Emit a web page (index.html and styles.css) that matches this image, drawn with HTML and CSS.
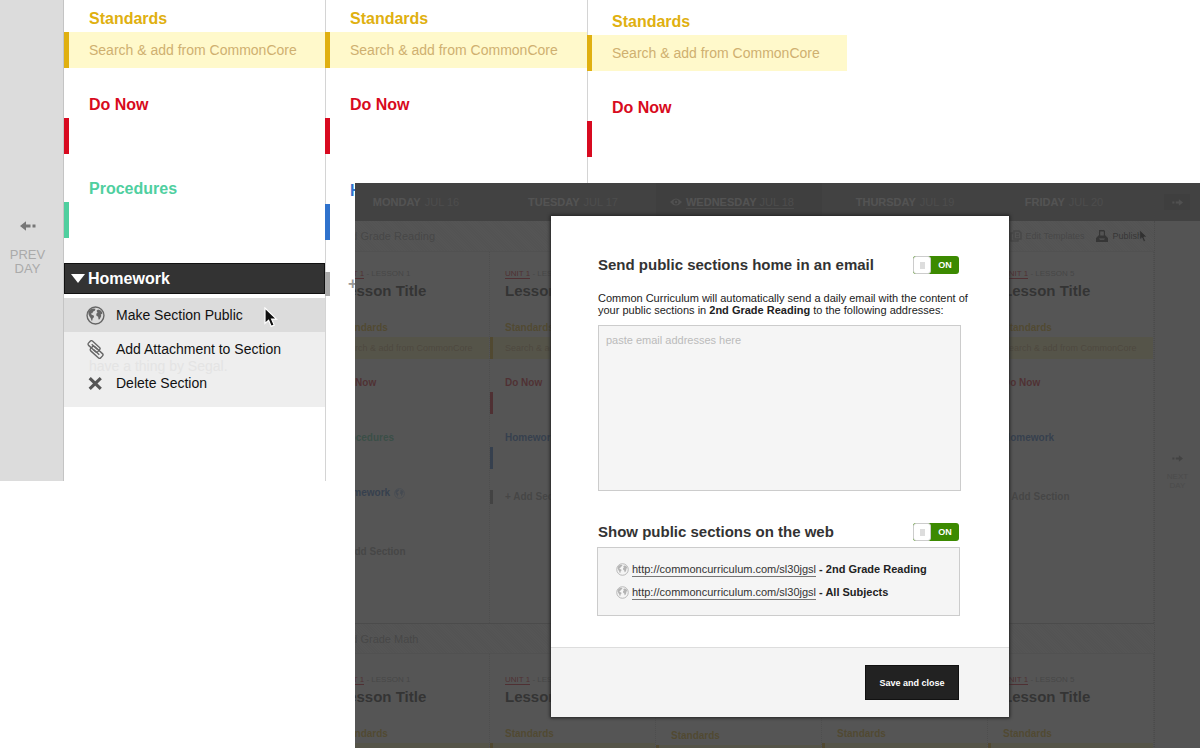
FILE: index.html
```html
<!DOCTYPE html>
<html lang="en">
<head>
<meta charset="utf-8">
<title>Common Curriculum</title>
<link rel="stylesheet" href="styles.css">
</head>
<body>
<svg class="defs" aria-hidden="true">
  <symbol id="globe" viewBox="0 0 18 18">
    <circle cx="9" cy="9" r="8" fill="none" stroke="currentColor" stroke-width="1.300"/>
    <path fill="currentColor" d="M2.200 5.500 4 3.300 6.500 2.300 9 2.600 8.300 4.600 6.800 5.200 6 6.800 4.600 7.200 5.400 8.300 7.300 9 7.600 10.400 6.300 11.800 6 13.800 5.200 14 4.500 11.600 3.200 9.800 2.300 7.600zM10 4.400 11.400 3.400 14 4.200 15.600 6.300 15.200 8 14 7.400 14.400 9.400 13 12.600 11.900 12.900 11.500 10.300 9.900 9.200 9.700 7.400 10.900 6.400z"/>
  </symbol>
  <symbol id="arrow" viewBox="0 0 16 10">
    <path fill="currentColor" d="M0 5 6 .3v3.200h4.500v3H6v3.200zM12.500 3.600h3v2.800h-3z"/>
  </symbol>
  <symbol id="pointer" viewBox="0 0 14 21">
    <path fill="#111" stroke="#fff" stroke-width="1.200" d="M1 1v15.500l3.600-3.300 2.600 6.200 3-1.300-2.600-6H12.500z"/>
  </symbol>
</svg>
<main class="stage">
  <section class="planner" aria-label="Week planner">
    <button class="prev" type="button">
      <svg class="arrow"><use href="#arrow"/></svg>
      <span>PREV<br>DAY</span>
    </button>
    <div class="day first">
      <div class="section gold"><h3>Standards</h3><button type="button" class="slot search">Search &amp; add from CommonCore</button></div>
      <div class="section red"><h3>Do Now</h3><div class="slot"></div></div>
      <div class="section green"><h3>Procedures</h3><div class="slot"></div></div>
      <div class="open">
        <button type="button" class="open-title"><svg class="caret" viewBox="0 0 14 9"><path fill="#fff" d="M0 0h14L7 9z"/></svg>Homework</button>
        <ul class="menu">
          <li><button type="button" class="hover"><svg class="icon"><use href="#globe"/></svg>Make Section Public</button></li>
          <li><button type="button"><svg class="icon" viewBox="0 0 18 18"><g transform="rotate(42 9 9)" fill="none" stroke="#666" stroke-width="1.300"><rect x="0" y="5" width="12" height="5.500" rx="1.500"/><rect x="5" y="7.500" width="13" height="5.500" rx="1.500"/><path d="M3 7.700h7M8 10.300h7"/></g></svg>Add Attachment to Section</button></li>
          <li><button type="button"><svg class="icon" viewBox="0 0 18 18"><path stroke="#555" stroke-width="3" d="M3.500 4l10.500 10M14 4 3.500 14"/></svg>Delete Section</button></li>
        </ul>
        <p class="ghost">have a thing by Segal.</p>
        <svg class="pointer"><use href="#pointer"/></svg>
      </div>
    </div>
    <div class="day">
      <div class="section gold"><h3>Standards</h3><button type="button" class="slot search">Search &amp; add from CommonCore</button></div>
      <div class="section red"><h3>Do Now</h3><div class="slot"></div></div>
      <div class="section blue"><h3>Homework</h3><div class="slot"></div></div>
      <button type="button" class="add">+</button>
    </div>
    <div class="day last">
      <div class="section gold"><h3>Standards</h3><button type="button" class="slot search">Search &amp; add from CommonCore</button></div>
      <div class="section red"><h3>Do Now</h3><div class="slot"></div></div>
    </div>
  </section>

  <section class="window" aria-label="Publish">
    <div class="week">
      <header class="days">
        <div class="monday"><b>MONDAY</b> JUL 16</div>
        <div><b>TUESDAY</b> JUL 17</div>
        <div class="today"><svg class="eye" viewBox="0 0 12 8"><path fill="currentColor" fill-rule="evenodd" d="M0 4Q6-3 12 4 6 11 0 4zM6 1.500a2.500 2.500 0 1 0 0 5 2.500 2.500 0 0 0 0-5z"/><circle cx="6" cy="4" r="1.200" fill="currentColor"/></svg><span class="under"><b>WEDNESDAY</b> JUL 18</span></div>
        <div><b>THURSDAY</b> JUL 19</div>
        <div class="friday"><b>FRIDAY</b> JUL 20</div>
        <button type="button" class="forward" aria-label="Next week"><svg class="small-arrow"><use href="#arrow"/></svg></button>
      </header>
      <div class="board">
        <div class="subjects">
          <div class="subject">
            <div class="bar"><h2>2nd Grade Reading</h2>
              <div class="tools">
                <button type="button"><svg class="tool" viewBox="0 0 12 12"><path fill="none" stroke="currentColor" stroke-width="1.500" d="M4 1h5l2 2v6H4zM3 3H1v8h7V9M6 4h3M6 6.500h3"/></svg>Edit Templates</button>
                <button type="button" class="publish"><svg class="tool" viewBox="0 0 12 12"><path fill="currentColor" d="M3 0h5l1 1v4l3 3v4H0V8l3-3zM4.200 1.500v4h3.600v-4zM3 8.500l1 1.200h4l1-1.200z" fill-rule="evenodd"/></svg>Publish</button>
                <svg class="tiny-pointer"><use href="#pointer"/></svg>
              </div>
            </div>
            <div class="lessons">
              <article><p class="unit"><a href="#u1">UNIT 1</a> - LESSON 1</p><h4>Lesson Title</h4>
                <div class="part gold"><h5>Standards</h5><div class="slot search">Search &amp; add from CommonCore</div></div>
                <div class="part red"><h5>Do Now</h5><div class="slot"></div></div>
                <div class="part green"><h5>Procedures</h5><div class="slot"></div></div>
                <div class="part blue"><h5>Homework <svg class="mini"><use href="#globe"/></svg></h5><div class="slot"></div></div>
                <div class="more">+ Add Section</div></article>
              <article><p class="unit"><a href="#u2">UNIT 1</a> - LESSON 2</p><h4>Lesson Title</h4>
                <div class="part gold"><h5>Standards</h5><div class="slot search">Search &amp; add from CommonCore</div></div>
                <div class="part red"><h5>Do Now</h5><div class="slot"></div></div>
                <div class="part blue"><h5>Homework</h5><div class="slot"></div></div>
                <div class="more">+ Add Section</div></article>
              <article></article>
              <article></article>
              <article><p class="unit"><a href="#u5">UNIT 1</a> - LESSON 5</p><h4>Lesson Title</h4>
                <div class="part gold"><h5>Standards</h5><div class="slot search">Search &amp; add from CommonCore</div></div>
                <div class="part red"><h5>Do Now</h5><div class="slot"></div></div>
                <div class="part blue"><h5>Homework</h5><div class="slot"></div></div>
                <div class="more">+ Add Section</div></article>
            </div>
          </div>
          <div class="subject math">
            <div class="bar"><h2>2nd Grade Math</h2></div>
            <div class="lessons">
              <article><p class="unit"><a href="#m1">UNIT 1</a> - LESSON 1</p><h4>Lesson Title</h4><div class="part gold"><h5>Standards</h5><div class="slot search"></div></div></article>
              <article><p class="unit"><a href="#m2">UNIT 1</a> - LESSON 2</p><h4>Lesson Title</h4><div class="part gold"><h5>Standards</h5><div class="slot search"></div></div></article>
              <article class="low"><div class="part gold"><h5>Standards</h5><div class="slot search"></div></div></article>
              <article class="untitled"><div class="part gold"><h5>Standards</h5><div class="slot search"></div></div></article>
              <article><p class="unit"><a href="#m5">UNIT 1</a> - LESSON 5</p><h4>Lesson Title</h4><div class="part gold"><h5>Standards</h5><div class="slot search"></div></div></article>
            </div>
          </div>
        </div>
        <div class="next"><svg class="small-arrow"><use href="#arrow"/></svg><span>NEXT<br>DAY</span></div>
      </div>
    </div>
    <div class="backdrop">
      <form class="modal">
        <div class="modal-body">
          <div class="row">
            <h2><label for="email-on">Send public sections home in an email</label></h2>
            <span class="toggle"><input type="checkbox" id="email-on" checked><span class="knob"></span><span class="on">ON</span></span>
          </div>
          <p class="intro"><label for="emails">Common Curriculum will automatically send a daily email with the content of<br>your public sections in <b>2nd Grade Reading</b> to the following addresses:</label></p>
          <textarea id="emails" placeholder="paste email addresses here"></textarea>
          <div class="row">
            <h2><label for="web-on">Show public sections on the web</label></h2>
            <span class="toggle"><input type="checkbox" id="web-on" checked><span class="knob"></span><span class="on">ON</span></span>
          </div>
          <ul class="links">
            <li><svg class="link-icon"><use href="#globe"/></svg><span><a href="#reading">http://commoncurriculum.com/sl30jgsl</a> <b>- 2nd Grade Reading</b></span></li>
            <li><svg class="link-icon"><use href="#globe"/></svg><span><a href="#all">http://commoncurriculum.com/sl30jgsl</a> <b>- All Subjects</b></span></li>
          </ul>
        </div>
        <footer><button type="button" class="save">Save and close</button></footer>
      </form>
    </div>
  </section>
</main>
</body>
</html>
```

FILE: styles.css
```css
* { box-sizing: border-box; }
body { margin: 0; background: #fff; color: #222; font-family: "Liberation Sans", Arial, sans-serif; }
h2, h3, h4, h5, p, ul { margin: 0; padding: 0; }
ul { list-style: none; }
button { margin: 0; padding: 0; border: 0; background: none; color: inherit; font: inherit; text-align: left; }
svg { display: block; flex: none; }
.defs { position: absolute; width: 0; height: 0; }
.stage { position: relative; min-height: 100vh; overflow: hidden; }

.gold { --tone: #e0b010; }
.red { --tone: #d80a20; }
.green { --tone: #4fcf9f; }
.blue { --tone: #2f72cc; }

/* Planner */
.planner { display: grid; grid-template-columns: 64px 261px 262px 260px; min-height: 481px; }
.prev { display: flex; flex-direction: column; align-items: center; justify-content: flex-start; gap: 17px; padding: 221px 8px 0 0; background: #dcdcdc; border-right: 1px solid #c4c4c4; color: #aaa; font-size: 13px; line-height: 14px; text-align: center; }
.arrow { width: 16px; height: 10px; color: #777; }
.day { padding-top: 9px; background: linear-gradient(#d4d4d4, #d4d4d4) left / 1px 100% no-repeat; }
.day.first { background: none; }
.day.last { padding-top: 12px; }
.section { margin-bottom: 25px; }
.section.gold { margin-bottom: 27px; }
.day .blue { margin-top: 27px; }
.section h3 { margin: 0 0 3px 25px; color: var(--tone); font-size: 16px; line-height: 20px; }
.slot { display: block; width: 100%; height: 36px; border-left: 5px solid var(--tone); }
.section .search { padding-left: 20px; background: #fff9cb; color: #cfb070; font-size: 14px; }
.add { display: flex; align-items: center; width: 100%; height: 24px; margin-top: 32px; padding-left: 18px; border-left: 5px solid #aaa; color: #999; font-size: 16px; font-weight: bold; }
.open { position: relative; }
.open-title { display: flex; align-items: center; gap: 3px; width: 100%; height: 31px; padding-left: 6px; background: #333; border: 1px solid #111; color: #fff; font-size: 16px; font-weight: bold; }
.caret { width: 14px; height: 9px; }
.menu { margin-top: 4px; padding-bottom: 7px; background: #eee; color: #111; font-size: 14px; }
.menu button { display: flex; align-items: center; gap: 11px; width: 100%; height: 34px; padding-left: 22px; }
.menu .hover { background: #dcdcdc; }
.icon { width: 19px; height: 19px; color: #666; }
.ghost { position: absolute; top: 96px; left: 25px; color: #e4e4e4; font-size: 14px; line-height: 14px; pointer-events: none; }
.pointer { position: absolute; top: 44px; left: 200px; width: 14px; height: 21px; }

/* Dimmed week view */
.window { position: absolute; top: 183px; right: 0; bottom: 0; left: 355px; overflow: hidden; background: #fff; }
.week { display: flex; flex-direction: column; min-height: 100%; margin-left: -31px; }
.days { display: grid; grid-template-columns: repeat(5, 1fr) 46px; height: 38px; background: #7e7e7e; color: #c4c4c4; font-size: 11px; line-height: 12px; }
.days > div { display: flex; align-items: center; justify-content: center; gap: 4px; }
.days .monday { padding-left: 18px; }
.days .friday { padding-right: 14px; }
.days .today { padding-right: 14px; background: #6c6c6c; }
.days b { color: #eee; }
.eye { width: 12px; height: 8px; color: #ddd; }
.under { border-bottom: 1px solid #b4b4b4; }
.forward { display: flex; align-items: center; justify-content: center; margin: 11px 10px; background: #6c6c6c; color: #ddd; }
.small-arrow { width: 11px; height: 7px; transform: scaleX(-1); }
.board { display: grid; grid-template-columns: 1fr 46px; flex: 1; }
.bar { display: flex; align-items: center; justify-content: space-between; height: 31px; padding: 0 12px 0 15px; background: repeating-linear-gradient(45deg, #f0f0f0 0 1px, #fff 1px 2px); border-bottom: 1px solid #e4e4e4; color: #a0a0a0; }
.bar h2 { font-size: 11px; font-weight: normal; }
.math .bar { border-top: 1px solid #bbb; }
.tools { position: relative; display: flex; gap: 12px; font-size: 9px; }
.tools button { display: flex; align-items: center; gap: 4px; }
.tools .publish { color: #333; }
.tool { width: 12px; height: 12px; }
.tiny-pointer { position: absolute; top: -1px; right: -6px; width: 9px; height: 14px; }
.lessons { display: grid; grid-template-columns: repeat(5, 1fr); min-height: 371px; }
article { padding-top: 17px; border-right: 1px dotted #ccc; }
.math article { padding-top: 21px; }
.math .untitled { padding-top: 73px; }
.math .low { padding-top: 75px; }
.unit { margin-left: 15px; color: #999; font-size: 8px; line-height: 10px; }
.unit a { color: #d80a20; text-decoration: none; border-bottom: 1px solid #d80a20; }
article h4 { margin: 2px 0 20px 15px; color: #222; font-size: 15px; line-height: 20px; }
.part { margin-bottom: 17px; }
.part h5, .more { margin: 0 0 2px 15px; color: var(--tone); font-size: 10px; line-height: 14px; }
.part h5 { display: flex; align-items: center; gap: 4px; }
.part .slot { height: 22px; border-left-width: 3px; }
.part .search { padding-left: 12px; background: #fff6b0; color: #c8a868; font-size: 9px; line-height: 22px; }
article:first-child .slot { border-left-color: transparent; }
article .more { margin: 21px 0 0; padding-left: 12px; border-left: 3px solid #888; color: #999; font-weight: bold; }
.mini { width: 11px; height: 11px; opacity: .5; }
.next { display: flex; flex-direction: column; align-items: center; gap: 10px; padding-top: 234px; background: #f4f4f4; border-left: 1px dotted #bbb; color: #bbb; font-size: 8px; line-height: 9px; text-align: center; }
.next .small-arrow { color: #888; }

/* Dialog */
.backdrop { position: absolute; inset: 0; padding-top: 33px; background: rgba(55, 55, 55, .85); }
.modal { width: 458px; margin: 0 191px 0 auto; background: #fff; box-shadow: 0 0 3px 1px #222; }
.modal-body { display: flex; flex-direction: column; padding: 38px 40px 31px 47px; }
.row { display: flex; align-items: center; justify-content: space-between; margin-right: 10px; height: 22px; }
.row h2 { color: #333; font-size: 15px; line-height: 20px; }
.toggle { position: relative; display: flex; width: 46px; height: 18px; border-radius: 3px; overflow: hidden; background: #3c8a00; color: #fff; font-size: 9px; font-weight: bold; line-height: 18px; }
.toggle input { position: absolute; inset: 0; width: 100%; height: 100%; margin: 0; opacity: 0; }
.knob { display: flex; align-items: center; justify-content: center; width: 18px; background: #fff; border: 1px solid #ccc; border-radius: 3px; }
.knob::before { content: ""; width: 5px; height: 7px; background: #ddd; }
.on { flex: 1; text-align: center; }
.intro { margin: 16px 0 9px; color: #222; font-size: 11px; line-height: 12px; white-space: nowrap; }
textarea { display: block; height: 166px; margin: 0 8px 30px 0; padding: 7px; border: 1px solid #ccc; border-radius: 0; background: #f5f5f5; resize: none; font: 11px/14px "Liberation Sans", Arial, sans-serif; }
textarea::placeholder { color: #bbb; opacity: 1; }
.links { display: flex; flex-direction: column; gap: 7px; margin: 4px 9px 0 -1px; padding: 13px 18px; height: 69px; border: 1px solid #ccc; background: #f5f5f5; font-size: 11px; line-height: 16px; }
.links li { display: flex; align-items: center; gap: 3px; }
.links a { display: inline-block; color: #333; line-height: 13px; text-decoration: none; border-bottom: 1px solid #777; }
.link-icon { width: 13px; height: 13px; color: #b4b4b4; }
.modal footer { display: flex; justify-content: flex-end; padding: 17px 50px; border-top: 1px solid #ddd; background: #f4f4f4; }
.save { width: 94px; height: 35px; background: #222; border: 1px solid #111; color: #fff; font-size: 9px; font-weight: bold; text-align: center; }
```
